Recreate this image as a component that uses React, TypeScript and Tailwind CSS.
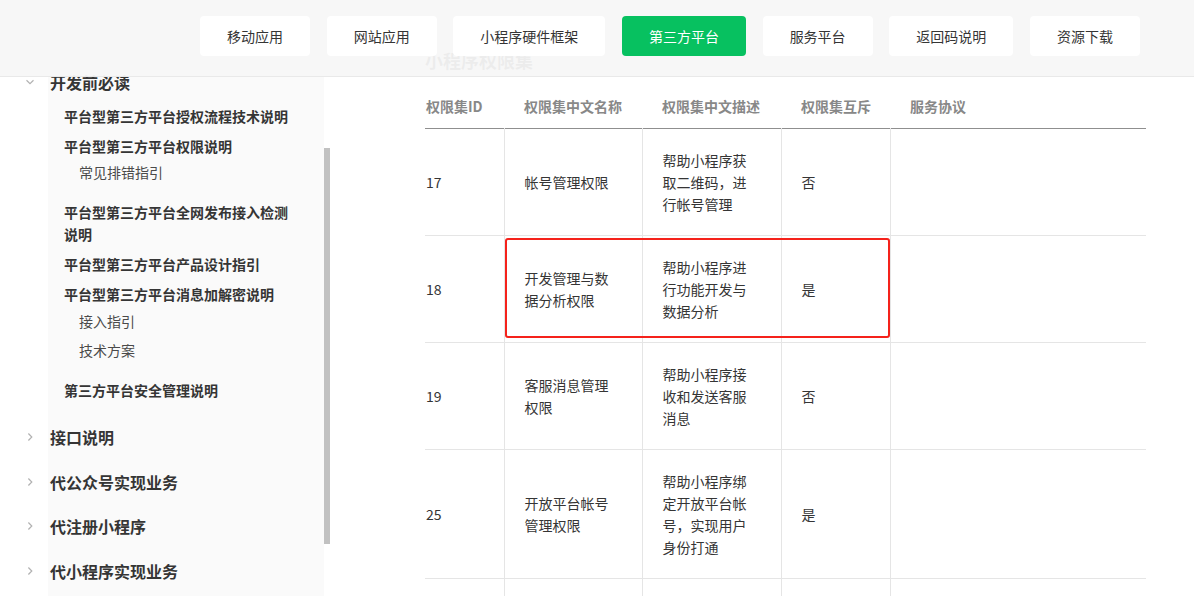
const tabs = ["移动应用", "网站应用", "小程序硬件框架", "第三方平台", "服务平台", "返回码说明", "资源下载"];

type NavItem = { level: 1 | 2 | 3; text: string; mt: string; open?: boolean };

// margins tuned so each line sits where the reference has it
const navItems: NavItem[] = [
  { level: 1, text: "开发前必读", mt: "mt-0", open: true },
  { level: 2, text: "平台型第三方平台授权流程技术说明", mt: "mt-3" },
  { level: 2, text: "平台型第三方平台权限说明", mt: "mt-2" },
  { level: 3, text: "常见排错指引", mt: "mt-1" },
  { level: 2, text: "平台型第三方平台全网发布接入检测说明", mt: "mt-[18px]" },
  { level: 2, text: "平台型第三方平台产品设计指引", mt: "mt-2" },
  { level: 2, text: "平台型第三方平台消息加解密说明", mt: "mt-2" },
  { level: 3, text: "接入指引", mt: "mt-[5px]" },
  { level: 3, text: "技术方案", mt: "mt-[7px]" },
  { level: 2, text: "第三方平台安全管理说明", mt: "mt-[18px]" },
  { level: 1, text: "接口说明", mt: "mt-[25px]" },
  { level: 1, text: "代公众号实现业务", mt: "mt-[23px]" },
  { level: 1, text: "代注册小程序", mt: "mt-[22px]" },
  { level: 1, text: "代小程序实现业务", mt: "mt-[23px]" },
];

const rows = [
  { id: "17", name: "帐号管理权限", desc: "帮助小程序获取二维码，进行帐号管理", mutex: "否" },
  { id: "18", name: "开发管理与数据分析权限", desc: "帮助小程序进行功能开发与数据分析", mutex: "是" },
  { id: "19", name: "客服消息管理权限", desc: "帮助小程序接收和发送客服消息", mutex: "否" },
  { id: "25", name: "开放平台帐号管理权限", desc: "帮助小程序绑定开放平台帐号，实现用户身份打通", mutex: "是" },
];

function Chevron({ open }: { open?: boolean }) {
  return (
    <svg width="10" height="10" viewBox="0 0 10 10" fill="none" stroke="#b2b2b2" strokeWidth="1.2">
      {open ? <path d="M1.5 3.2 5 6.6 8.5 3.2" /> : <path d="M3.4 1.5 6.8 5 3.4 8.5" />}
    </svg>
  );
}

function Sidebar() {
  return (
    <aside className="flex w-[330px] shrink-0">
      <nav className="w-[324px] bg-[linear-gradient(to_right,#ffffff_48px,#fafafa_48px)] pt-[71px] text-[#353535]">
        {navItems.map((item) => {
          if (item.level === 1) {
            return (
              <div key={item.text} className={`${item.mt} flex items-center text-[16px] font-bold leading-[22px]`}>
                <span className="ml-[25px] mr-[15px] flex w-[10px] items-center">
                  <Chevron open={item.open} />
                </span>
                {item.text}
              </div>
            );
          }
          if (item.level === 2) {
            return (
              <div key={item.text} className={`${item.mt} pl-[64px] pr-[30px] text-[14px] font-bold leading-[22px]`}>
                {item.text}
              </div>
            );
          }
          return (
            <div key={item.text} className={`${item.mt} pl-[79px] text-[14px] leading-[22px] text-[#4a4a4a]`}>
              {item.text}
            </div>
          );
        })}
      </nav>
      <div className="w-[6px]">
        <div className="mt-[148px] h-[396px] bg-[#c1c1c1]" />
      </div>
    </aside>
  );
}

function PermissionTable() {
  return (
    <table className="mt-[11px] w-[721px] table-fixed border-collapse text-left text-[14px] leading-[22px] text-[#353535]">
      <colgroup>
        <col className="w-[79px]" />
        <col className="w-[138px]" />
        <col className="w-[139px]" />
        <col className="w-[109px]" />
        <col className="w-[256px]" />
      </colgroup>
      <thead>
        <tr className="h-[44px] border-b border-[#8f8f8f] text-[#888888]">
          <th className="pl-px font-bold">权限集ID</th>
          <th className="pl-5 font-bold">权限集中文名称</th>
          <th className="pl-5 font-bold">权限集中文描述</th>
          <th className="pl-5 font-bold">权限集互斥</th>
          <th className="pl-5 font-bold">服务协议</th>
        </tr>
      </thead>
      <tbody>
        {rows.map((r) => (
          <tr key={r.id} className="border-b border-[#e5e5e5]">
            <td className="py-5 pl-px align-middle">{r.id}</td>
            <td className="border-l border-[#e5e5e5] px-5 py-5 align-middle">{r.name}</td>
            <td className="border-l border-[#e5e5e5] py-5 pl-5 pr-6 align-middle">{r.desc}</td>
            <td className="border-l border-[#e5e5e5] px-5 py-5 align-middle">{r.mutex}</td>
            <td className="border-l border-[#e5e5e5] px-5 py-5 align-middle" />
          </tr>
        ))}
        {/* next row starts below the fold, only its cell borders show */}
        <tr className="h-[40px]">
          <td />
          <td className="border-l border-[#e5e5e5]" />
          <td className="border-l border-[#e5e5e5]" />
          <td className="border-l border-[#e5e5e5]" />
          <td className="border-l border-[#e5e5e5]" />
        </tr>
      </tbody>
    </table>
  );
}

export default function App() {
  return (
    <div className="relative h-[596px] w-full overflow-hidden bg-white font-['Noto_Sans_CJK_SC','Noto_Sans',sans-serif]">
      <header className="absolute inset-x-0 top-0 z-10 flex h-[77px] items-start gap-[16.67px] border-b border-[#e9e9e9] bg-[#f7f7f7]/95 pl-[200px] pt-4">
        {tabs.map((t) => (
          <button
            key={t}
            type="button"
            className={
              t === "第三方平台"
                ? "h-10 rounded-[4px] bg-[#07c160] px-[27px] text-[14px] leading-[39px] text-white"
                : "h-10 rounded-[4px] bg-white px-[27px] text-[14px] leading-[39px] text-[#353535]"
            }
          >
            {t}
          </button>
        ))}
      </header>

      <div className="flex h-full">
        <Sidebar />
        <main className="relative flex-1 pl-[95px] pt-[47px]">
          <h2 className="text-[18px] font-bold leading-[26px] text-[#353535]">小程序权限集</h2>
          <PermissionTable />
          {/* annotation box round row 18 */}
          <div className="pointer-events-none absolute left-[175px] top-[238px] h-[100px] w-[385px] rounded-[3px] border-2 border-[#f5221b]" />
        </main>
      </div>
    </div>
  );
}
